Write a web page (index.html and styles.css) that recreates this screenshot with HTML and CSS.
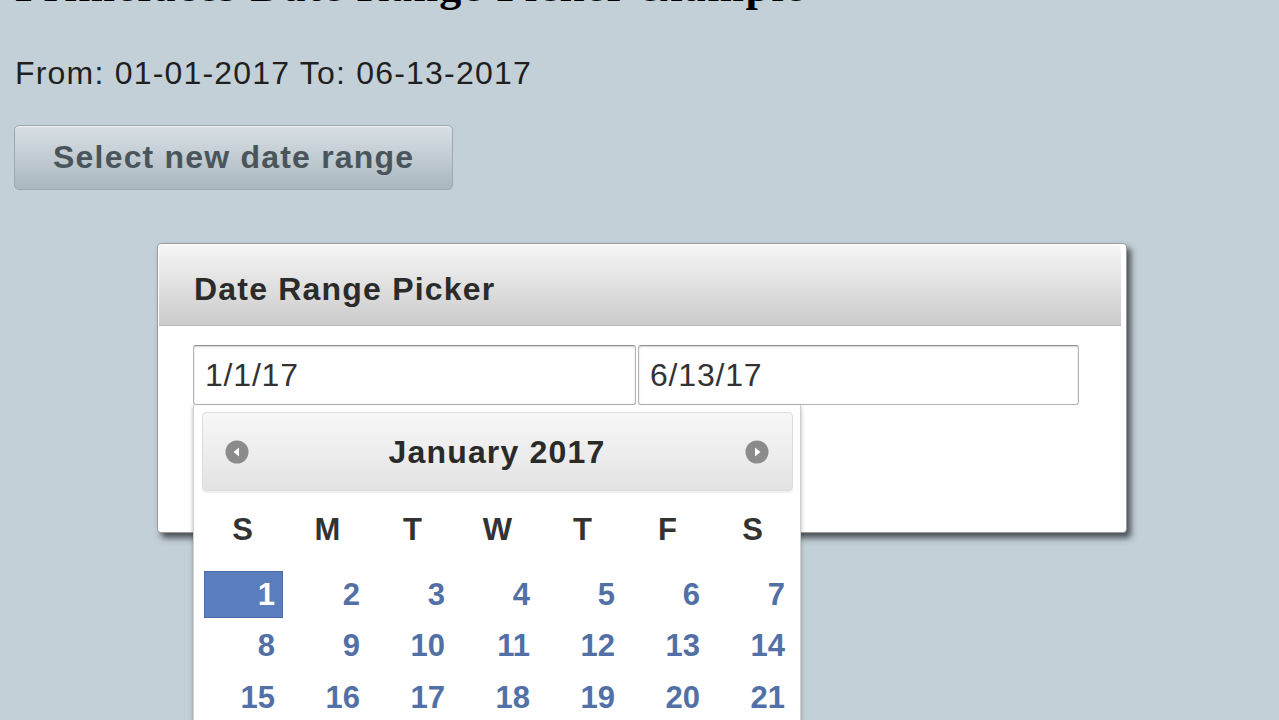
FILE: index.html
```html
<!DOCTYPE html>
<html lang="en">
<head>
<meta charset="utf-8">
<title>Primefaces Date Range Picker example</title>
<link rel="stylesheet" href="styles.css">
</head>
<body>
<div class="page">
  <h1 class="heading">Primefaces Date Range Picker example</h1>
  <p class="range">From: 01-01-2017 To: 06-13-2017</p>
  <button class="btn" type="button">Select new date range</button>

  <div class="dialog">
    <div class="dialog-title">Date Range Picker</div>
    <div class="dialog-body">
      <div class="inputs">
        <div class="field">
          <input class="date-input first" type="text" value="1/1/17" readonly>
          <div class="calendar">
            <div class="cal-header">
              <svg class="nav" width="24" height="24" viewBox="0 0 24 24"><circle cx="12" cy="12" r="11.5" fill="#8b8b8b"/><polygon points="14,7.5 8.5,12 14,16.5" fill="#fff"/></svg>
              <span class="cal-title">January 2017</span>
              <svg class="nav" width="24" height="24" viewBox="0 0 24 24"><circle cx="12" cy="12" r="11.5" fill="#8b8b8b"/><polygon points="10,7.5 15.5,12 10,16.5" fill="#fff"/></svg>
            </div>
            <div class="weekdays">
              <span>S</span><span>M</span><span>T</span><span>W</span><span>T</span><span>F</span><span>S</span>
            </div>
            <div class="days">
              <span class="day selected">1</span><span class="day">2</span><span class="day">3</span><span class="day">4</span><span class="day">5</span><span class="day">6</span><span class="day">7</span>
              <span class="day">8</span><span class="day">9</span><span class="day">10</span><span class="day">11</span><span class="day">12</span><span class="day">13</span><span class="day">14</span>
              <span class="day">15</span><span class="day">16</span><span class="day">17</span><span class="day">18</span><span class="day">19</span><span class="day">20</span><span class="day">21</span>
              <span class="day">22</span><span class="day">23</span><span class="day">24</span><span class="day">25</span><span class="day">26</span><span class="day">27</span><span class="day">28</span>
              <span class="day">29</span><span class="day">30</span><span class="day">31</span>
            </div>
          </div>
        </div>
        <input class="date-input second" type="text" value="6/13/17" readonly>
      </div>
    </div>
  </div>
</div>
</body>
</html>
```

FILE: styles.css
```css
html, body {
  margin: 0;
  padding: 0;
  overflow: hidden;
  height: 720px;
}

body {
  background: #c4d0d8;
  font-family: "Liberation Sans", Arial, sans-serif;
  color: #1e1e1e;
}

.page {
  padding-left: 15px;
}

.heading {
  margin: -35px 0 0;
  font-family: "Liberation Serif", "Times New Roman", serif;
  font-weight: 700;
  font-size: 44px;
  line-height: 44px;
  letter-spacing: 1.5px;
  color: #000;
  white-space: nowrap;
}

.range {
  margin: 48px 0 0;
  font-size: 32px;
  line-height: 32px;
  letter-spacing: 1.2px;
  color: #1f1f1f;
}

.btn {
  display: block;
  margin: 36px 0 0 -1px;
  height: 65px;
  padding: 0 38px;
  border: 1px solid #9ba8b0;
  border-radius: 5px;
  background: linear-gradient(#d8e0e5, #aab7bf);
  box-shadow: inset 0 1px 0 rgba(255, 255, 255, 0.45);
  font-family: "Liberation Sans", Arial, sans-serif;
  font-weight: 700;
  font-size: 32px;
  letter-spacing: 1.2px;
  color: #4a555b;
}

.dialog {
  margin: 53px 0 0 142px;
  width: 970px;
  height: 290px;
  box-sizing: border-box;
  padding: 1px 5px 0 1px;
  background: #fff;
  border: 1px solid #9c9c9c;
  border-radius: 4px;
  box-shadow: 4px 5px 6px rgba(20, 25, 30, 0.7);
}

.dialog-title {
  height: 81px;
  box-sizing: border-box;
  display: flex;
  align-items: center;
  padding: 8px 0 0 35px;
  background: linear-gradient(#f6f6f6, #cbcbcb);
  border-bottom: 1px solid #b9b9b9;
  border-radius: 3px 3px 0 0;
  font-weight: 700;
  font-size: 32px;
  letter-spacing: 1.2px;
  color: #2b2b2b;
}

.dialog-body {
  padding: 19px 0 0 34px;
}

.inputs {
  display: flex;
  gap: 2px;
}

.field {
  position: relative;
}

.date-input {
  display: block;
  height: 60px;
  box-sizing: border-box;
  padding: 0 11px;
  border: 1px solid #b3b3b3;
  border-top-color: #8e8e8e;
  border-radius: 3px;
  box-shadow: inset 0 1px 2px rgba(0, 0, 0, 0.18);
  background: #fff;
  font-family: "Liberation Sans", Arial, sans-serif;
  font-size: 32px;
  letter-spacing: 0.8px;
  color: #333;
  outline: none;
}

.date-input.first {
  width: 443px;
}

.date-input.second {
  width: 441px;
}

.calendar {
  position: absolute;
  top: 100%;
  left: 0;
  width: 608px;
  height: 340px;
  box-sizing: border-box;
  padding: 7px 7px 0 8px;
  background: #fff;
  border: 1px solid #cfcfcf;
  border-top: none;
  box-shadow: 0 2px 4px rgba(0, 0, 0, 0.3);
  z-index: 2;
}

.cal-header {
  height: 79px;
  box-sizing: border-box;
  display: flex;
  align-items: center;
  justify-content: space-between;
  padding: 0 23px 0 22px;
  border: 1px solid #dcdcdc;
  border-radius: 4px;
  background: linear-gradient(#f7f7f7, #e3e3e3);
  box-shadow: 0 2px 1px rgba(0, 0, 0, 0.06);
}

.nav {
  display: block;
  flex: none;
}

.cal-title {
  font-weight: 700;
  font-size: 32px;
  letter-spacing: 1.2px;
  color: #2a2a2a;
  padding-top: 2px;
}

.weekdays {
  display: grid;
  grid-template-columns: repeat(7, 1fr);
  column-gap: 4px;
  height: 50px;
  margin-top: 14px;
  align-items: center;
  font-weight: 700;
  font-size: 31px;
  color: #333;
  text-align: center;
}

.days {
  display: grid;
  grid-template-columns: repeat(7, 1fr);
  grid-auto-rows: 47px;
  column-gap: 4px;
  row-gap: 4.5px;
  margin-top: 16px;
}

.day {
  display: flex;
  align-items: center;
  justify-content: flex-end;
  padding-right: 8px;
  font-weight: 700;
  font-size: 31px;
  color: #5270a6;
}

.day.selected {
  margin-left: 2px;
  background: #5a7dbe;
  border: 1px solid #4a6bab;
  padding-right: 7px;
  color: #fff;
}
```
